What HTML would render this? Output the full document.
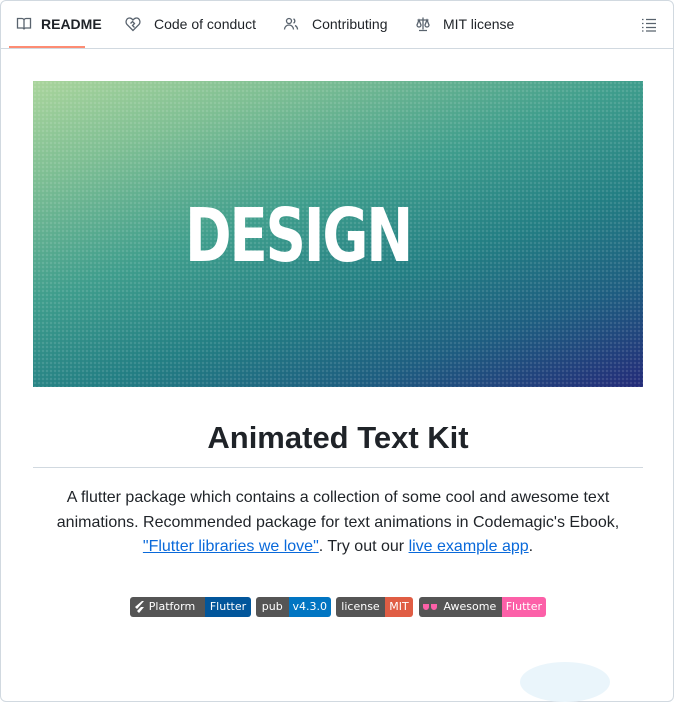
<!DOCTYPE html>
<html><head><style>
body{margin:0;width:674px;height:674px;overflow:hidden;background:#fff;font-family:"Liberation Sans",sans-serif;color:#1f2328;position:relative}
.frame{position:absolute;left:0;top:0;width:672px;height:700px;border:1px solid #d1d9e0;border-radius:6px}
.tabs{position:absolute;left:0;top:0;width:674px;height:48px;border-bottom:1px solid #d1d9e0}
.tab{position:absolute;top:16px;font-size:14px;color:#1f2328}
.ul{position:absolute;left:9px;top:46px;width:76px;height:2px;background:#fd8c73}
svg{position:absolute}
.img{position:absolute;left:33px;top:81px;width:610px;height:306px;background:linear-gradient(160deg,#a9d49b 0%,#7fbf93 18%,#3e9d8c 42%,#227e83 62%,#1d5d80 80%,#232a78 100%);overflow:hidden}
.img:after{content:"";position:absolute;inset:0;background-image:radial-gradient(rgba(255,255,255,.12) 1px,transparent 1.5px);background-size:4px 4px}
.design{position:absolute;left:152px;top:118px;font:900 74px "DejaVu Sans",sans-serif;color:#fff;letter-spacing:-3px;transform:scaleX(.76);transform-origin:left;line-height:1}
h1{position:absolute;left:33px;width:610px;top:420px;margin:0;text-align:center;font-size:31px;font-weight:700;padding-bottom:11px;border-bottom:1px solid #d1d9e0}
p{position:absolute;left:40px;width:596px;top:486px;margin:0;text-align:center;font-size:16px;line-height:24.5px}
a{color:#0969da;text-decoration:underline}
.b{position:absolute;top:597px;height:20px;font:11px "DejaVu Sans",sans-serif;color:#fff;display:flex;border-radius:3px;overflow:hidden}
.b span{padding:0 4px;line-height:20px;text-align:center}
</style></head><body>
<div class="frame"></div>
<div class="tabs">
<svg style="left:16px;top:16px" width="16" height="16" viewBox="0 0 16 16" fill="none" stroke="#59636e" stroke-width="1.3"><path d="M1.5 2.5h4.5a2 2 0 0 1 2 2v9a1.5 1.5 0 0 0-1.5-1.5H1.5z M14.5 2.5H10a2 2 0 0 0-2 2v9a1.5 1.5 0 0 1 1.5-1.5h5z"/></svg>
<div class="tab" style="left:41px;font-weight:700">README</div>
<svg style="left:125px;top:16px" width="16" height="16" viewBox="0 0 16 16" fill="none" stroke="#59636e" stroke-width="1.3"><path d="M8 14.5 2 8.5C0 6 1.5 2 4.5 2 6 2 7.2 3 8 4c.8-1 2-2 3.5-2 3 0 4.5 4 2.5 6.5z M5.5 7.5l2-2 2 2-2 2 2 2"/></svg>
<div class="tab" style="left:154px">Code of conduct</div>
<svg style="left:283px;top:16px" width="16" height="16" viewBox="0 0 16 16" fill="none" stroke="#59636e" stroke-width="1.3"><circle cx="6" cy="5" r="2.5"/><path d="M1.5 13.5c0-2.5 2-4.5 4.5-4.5s4.5 2 4.5 4.5M10.5 2.8a2.5 2.5 0 0 1 0 4.4M12 9.5c1.5.7 2.5 2.2 2.5 4"/></svg>
<div class="tab" style="left:312px">Contributing</div>
<svg style="left:415px;top:16px" width="16" height="16" viewBox="0 0 16 16" fill="none" stroke="#59636e" stroke-width="1.3"><path d="M8 1.5v12M4 14.5h8M2.5 4h11M4 4 2 9a2 2 0 0 0 4 0zM12 4l-2 5a2 2 0 0 0 4 0z"/></svg>
<div class="tab" style="left:443px">MIT license</div>
<svg style="left:641px;top:17px" width="16" height="16" viewBox="0 0 16 16" fill="none" stroke="#59636e" stroke-width="1.3"><path d="M1 2.5h1.5M5 2.5h10M1 6.5h1.5M5 6.5h10M1 10.5h1.5M5 10.5h10M1 14h1.5M5 14h10"/></svg>
<div class="ul"></div>
</div>
<div class="img"><div class="design">DESIGN</div></div>
<h1>Animated Text Kit</h1>
<p>A flutter package which contains a collection of some cool and awesome text animations. Recommended package for text animations in Codemagic's Ebook, <a>"Flutter libraries we love"</a>. Try out our <a>live example app</a>.</p>
<div class="b" style="left:130px;width:121px"><span style="background:#555;width:66px;padding:0 0 0 9px;position:relative">Platform<svg style="left:5px;top:4px" width="10" height="12" viewBox="0 0 10 12"><path d="M7 0 0 6l2 2 7-8zM6 6 2 10l2 2 5-6z" fill="#fff"/></svg></span><span style="background:#02569b;flex:1">Flutter</span></div>
<div class="b" style="left:256px;width:75px"><span style="background:#555;width:25px">pub</span><span style="background:#0175c2;flex:1">v4.3.0</span></div>
<div class="b" style="left:336px;width:77px"><span style="background:#555;width:41px">license</span><span style="background:#e05d44;flex:1">MIT</span></div>
<div class="b" style="left:419px;width:127px"><span style="background:#555;width:65px;padding:0 0 0 19px;position:relative">Awesome<svg style="left:4px;top:7px" width="14" height="6" viewBox="0 0 14 6"><path d="M0 0h6v3a3 3 0 0 1-6 0zM8 0h6v3a3 3 0 0 1-6 0z" fill="#fc60a8"/></svg></span><span style="background:#fc60a8;flex:1">Flutter</span></div>
<div style="position:absolute;left:520px;top:662px;width:90px;height:40px;border-radius:50%;background:#eaf5fb"></div>
</body></html>
